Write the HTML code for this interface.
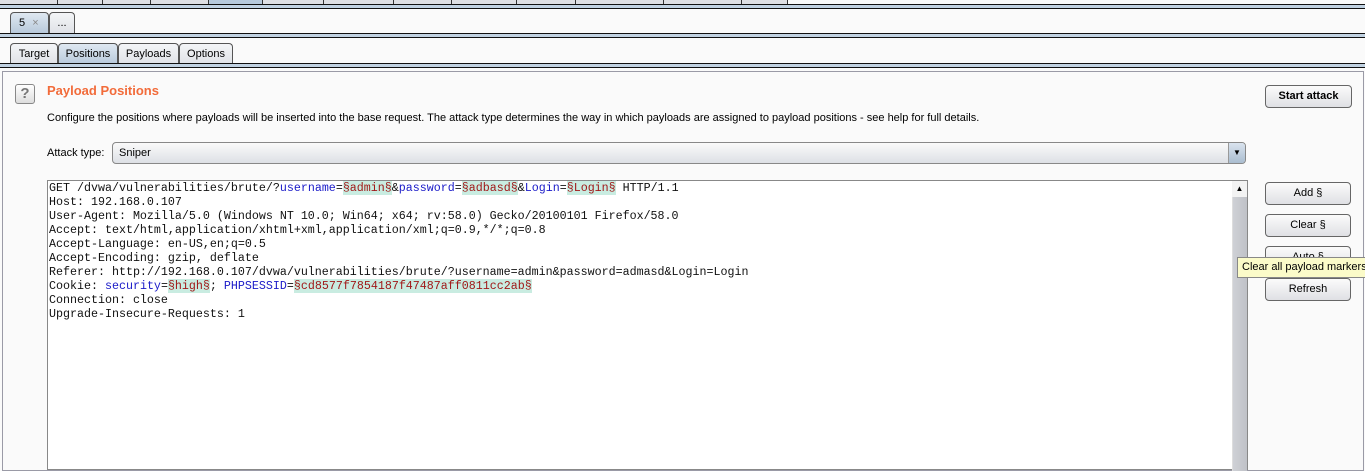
<!DOCTYPE html>
<html><head><style>
*{box-sizing:border-box;margin:0;padding:0}
body{width:1365px;height:460px;overflow:hidden;background:#fafafa;font-family:"Liberation Sans",sans-serif;font-size:11px;position:relative}
.abs{position:absolute}
.band{position:absolute;left:0;width:1365px;height:5px;background:#c1d2e2;border-top:1px solid #111;border-bottom:1px solid #111}
.tab{position:absolute;border:1px solid #555;border-bottom:none;border-radius:4px 4px 0 0;background:linear-gradient(#f4f5f7,#dfe1e6);font-size:11px;color:#000;text-align:center}
.tab.sel{background:linear-gradient(#dfe8f1,#b6c8da)}
.btn{position:absolute;border:1px solid #666;border-radius:4px;background:linear-gradient(#fbfbfb,#dfe0e4);text-align:center;font-size:11px;line-height:20px;color:#000}
pre{font-family:"Liberation Mono",monospace;font-size:11.67px;line-height:14px;color:#111}
.k{color:#1a1ac8}.m{background:#c9ece1;color:#a01818}
</style></head><body>
<div class="abs" style="left:0;top:0;width:788px;height:4px;background:#dedfe3"></div>
<div class="abs" style="left:208px;top:0;width:54px;height:4px;background:#b7c9db"></div>
<div class="abs" style="left:57px;top:0;width:1px;height:4px;background:#333"></div>
<div class="abs" style="left:102px;top:0;width:1px;height:4px;background:#333"></div>
<div class="abs" style="left:150px;top:0;width:1px;height:4px;background:#333"></div>
<div class="abs" style="left:208px;top:0;width:1px;height:4px;background:#333"></div>
<div class="abs" style="left:262px;top:0;width:1px;height:4px;background:#333"></div>
<div class="abs" style="left:323px;top:0;width:1px;height:4px;background:#333"></div>
<div class="abs" style="left:393px;top:0;width:1px;height:4px;background:#333"></div>
<div class="abs" style="left:451px;top:0;width:1px;height:4px;background:#333"></div>
<div class="abs" style="left:516px;top:0;width:1px;height:4px;background:#333"></div>
<div class="abs" style="left:575px;top:0;width:1px;height:4px;background:#333"></div>
<div class="abs" style="left:663px;top:0;width:1px;height:4px;background:#333"></div>
<div class="abs" style="left:741px;top:0;width:1px;height:4px;background:#333"></div>
<div class="abs" style="left:787px;top:0;width:1px;height:4px;background:#333"></div>
<div class="band" style="top:4px"></div>
<div class="tab sel" style="left:10px;top:12px;width:39px;height:22px;line-height:21px;text-align:left;padding-left:8px">5 <span style="color:#888;margin-left:4px">×</span></div>
<div class="tab" style="left:49px;top:12px;width:26px;height:22px;line-height:21px">...</div>
<div class="band" style="top:33px"></div>
<div class="tab" style="left:10px;top:43px;width:48px;height:22px;line-height:21px">Target</div>
<div class="tab sel" style="left:58px;top:43px;width:60px;height:22px;line-height:21px">Positions</div>
<div class="tab" style="left:118px;top:43px;width:61px;height:22px;line-height:21px">Payloads</div>
<div class="tab" style="left:179px;top:43px;width:54px;height:22px;line-height:21px">Options</div>
<div class="band" style="top:63px"></div>
<div class="abs" style="left:2px;top:71px;width:1362px;height:400px;border:1px solid #9a9aa6;background:#fafafa"></div>
<div class="abs" style="left:15px;top:84px;width:20px;height:20px;border:1px solid #888;border-radius:3px;background:linear-gradient(#fff,#ddd);color:#777;font-weight:bold;font-size:15px;text-align:center;line-height:18px">?</div>
<div class="abs" style="left:47px;top:83px;color:#f26b3a;font-weight:bold;font-size:13px">Payload Positions</div>
<div class="abs" style="left:47px;top:112px;color:#000">Configure the positions where payloads will be inserted into the base request. The attack type determines the way in which payloads are assigned to payload positions - see help for full details.</div>
<div class="abs" style="left:47px;top:147px">Attack type:</div>
<div class="abs" style="left:112px;top:142px;width:1134px;height:22px;border:1px solid #888;border-radius:4px;background:linear-gradient(#fafafa,#dde0e5);line-height:20px;padding-left:6px">Sniper</div>
<div class="abs" style="left:1228px;top:143px;width:17px;height:20px;border-left:1px solid #999;border-radius:0 3px 3px 0;background:linear-gradient(#d9e3ee,#aabdd0);text-align:center;font-size:8px;line-height:20px">▼</div>
<div class="btn" style="left:1265px;top:85px;width:87px;height:23px;font-weight:bold">Start attack</div>
<div class="abs" style="left:47px;top:180px;width:1201px;height:290px;border:1px solid #888;background:#fff"></div>
<div class="abs" style="left:1232px;top:181px;width:15px;height:290px;background:linear-gradient(90deg,#cfd1d6,#bfc1c7);border-left:1px solid #ddd"></div>
<div class="abs" style="left:1232px;top:181px;width:15px;height:16px;background:#f3f3f3;text-align:center;font-size:8px;line-height:16px">▲</div>
<pre class="abs" style="left:49px;top:181px">GET /dvwa/vulnerabilities/brute/?<span class="k">username</span>=<span class="m">§admin§</span>&amp;<span class="k">password</span>=<span class="m">§adbasd§</span>&amp;<span class="k">Login</span>=<span class="m">§Login§</span> HTTP/1.1
Host: 192.168.0.107
User-Agent: Mozilla/5.0 (Windows NT 10.0; Win64; x64; rv:58.0) Gecko/20100101 Firefox/58.0
Accept: text/html,application/xhtml+xml,application/xml;q=0.9,*/*;q=0.8
Accept-Language: en-US,en;q=0.5
Accept-Encoding: gzip, deflate
Referer: http://192.168.0.107/dvwa/vulnerabilities/brute/?username=admin&amp;password=admasd&amp;Login=Login
Cookie: <span class="k">security</span>=<span class="m">§high§</span>; <span class="k">PHPSESSID</span>=<span class="m">§cd8577f7854187f47487aff0811cc2ab§</span>
Connection: close
Upgrade-Insecure-Requests: 1</pre>
<div class="btn" style="left:1265px;top:182px;width:86px;height:23px">Add §</div>
<div class="btn" style="left:1265px;top:214px;width:86px;height:23px">Clear §</div>
<div class="btn" style="left:1265px;top:246px;width:86px;height:23px">Auto §</div>
<div class="btn" style="left:1265px;top:278px;width:86px;height:23px">Refresh</div>
<div class="abs" style="left:1237px;top:257px;width:130px;height:21px;background:#fbfbc9;border:1px solid #888;line-height:19px;padding-left:4px;font-size:11px;white-space:nowrap;overflow:hidden">Clear all payload markers</div>
</body></html>
